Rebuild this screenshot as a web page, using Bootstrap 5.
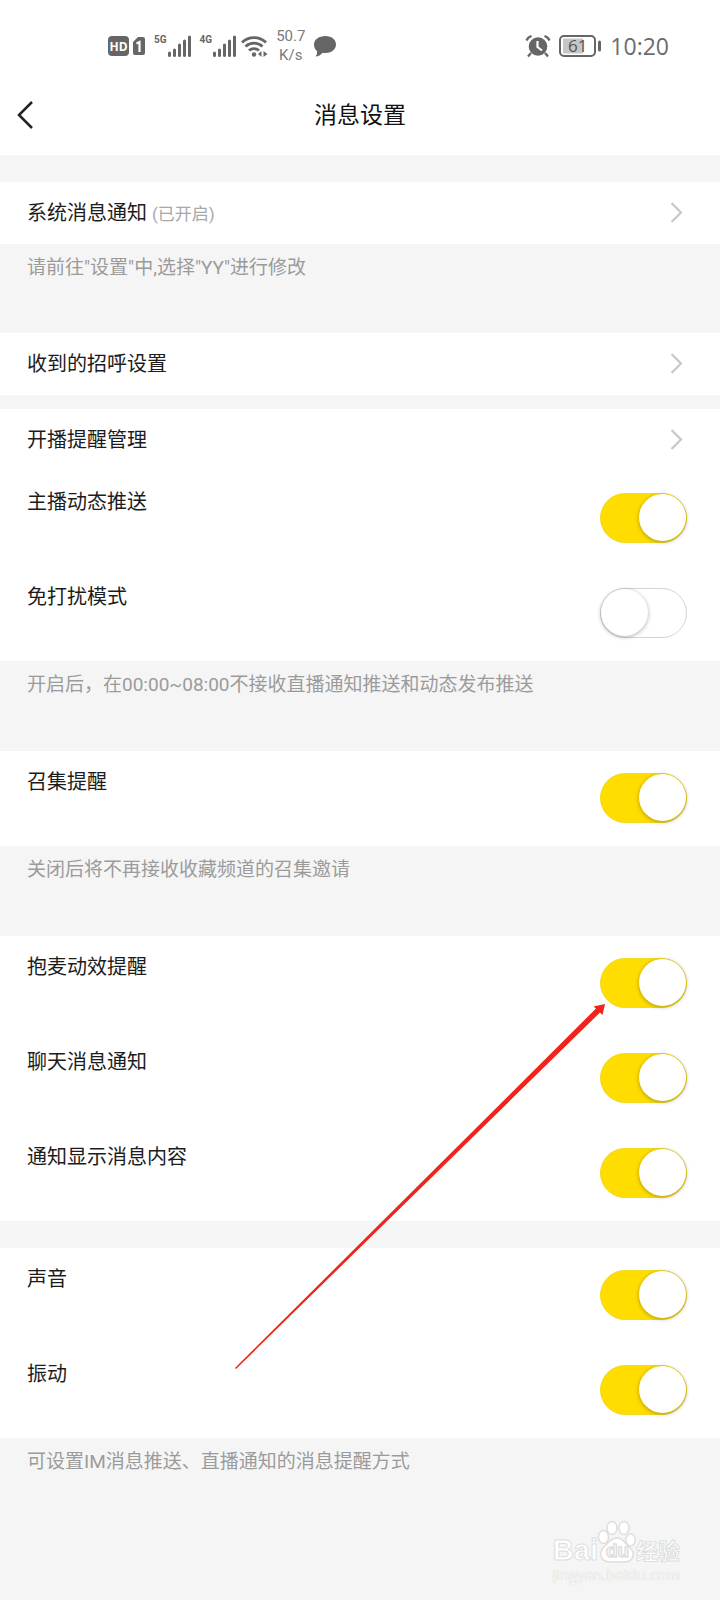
<!DOCTYPE html>
<html lang="zh-CN">
<head>
<meta charset="utf-8">
<meta name="viewport" content="width=device-width, initial-scale=1">
<title>消息设置</title>
<link href="https://cdn.jsdelivr.net/npm/bootstrap@5.3.0/dist/css/bootstrap.min.css" rel="stylesheet">
<style>
  body { font-family: Roboto, "Noto Sans CJK SC", sans-serif; background: #f5f5f5; color: #1c1c1c; }
  /* status bar */
  .status-bar { height: 77px; padding: 14px 51px 0 108px; color: #666; }
  .net-label { font: 700 10px/11px Roboto, sans-serif; }
  .net-speed { font-size: 15px; line-height: 19px; color: #7a7a7a; }
  .clock { font: 400 23px/28px "Open Sans", sans-serif; color: #6c6c6c; }
  .battery-text { font: 400 17px "Open Sans", sans-serif; }
  .hd-text { font: 700 12px "Open Sans", sans-serif; }
  /* title bar */
  .title-bar { height: 78px; padding: 0 16px; }
  .title-bar h1 { font-size: 23px; line-height: 32px; color: #111; }
  /* rows */
  .setting-row { padding: 0 33px 0 27px; font-size: 20px; line-height: 62px; color: inherit; }
  .link-row { height: 62px; padding-right: 37px; }
  .switch-row { min-height: 95px; }
  .state-text { font-size: 17px; line-height: 20px; color: #a8a8a8; }
  .hint { padding: 10px 27px 0; font-size: 19px; line-height: 28px; color: #9b9b9b; }
  .hint-tall { min-height: 90px; }
  .hint-tall.first-hint { min-height: 89px; }
  .gap-wide { margin-top: 27px; }
  .gap-thin { margin-top: 14px; }
  .form-check-input.toggle {
    width: 87px; height: 50px; margin: 22px 0 0; float: none; padding: 0; flex: none;
    border: 1px solid #d4d4d4; border-radius: 25px; background: #fff none; position: relative;
  }
  .toggle::before {
    content: ""; position: absolute; left: 0; top: 0; width: 47px; height: 47px;
    border-radius: 50%; background: #fff; box-shadow: 0 1px 4px rgba(0,0,0,.32);
  }
  .form-check-input.toggle:checked { background: #fd0 none; border-color: #f3d920; }
  .toggle:checked::before { left: 38px; }
  .pointer-arrow { position: absolute; top: 68px; right: 115px; pointer-events: none; }
  /* watermark */
  .watermark { padding: 0 40px 16px; color: #fff; }
  .wm-brand { font: 700 29px/28px "Liberation Sans", sans-serif; -webkit-text-stroke: 1px #dedede; }
  .wm-cn { font: 700 22px/30px "Noto Sans CJK SC", sans-serif; -webkit-text-stroke: 1px #dedede; }
  .wm-du { font: 700 19px "Liberation Sans", sans-serif; }
  .wm-url { font: 400 15px/20px "Open Sans", sans-serif; color: #fafafa; text-shadow: 0 0 1px #bbb; }
</style>
</head>
<body>
<div class="d-flex flex-column min-vh-100">
  <header class="bg-white">
    <div class="status-bar d-flex justify-content-between align-items-center">
      <div class="d-flex align-items-center">
        <svg width="38" height="22" viewBox="0 0 38 22" aria-label="HD 1">
          <rect x="0" y="1" width="21" height="20" rx="4" fill="#666"/>
          <text x="1.500" y="15.500" class="hd-text" fill="#fff">HD</text>
          <path d="M30 2h5a2 2 0 0 1 2 2v14a2 2 0 0 1-2 2h-8a2 2 0 0 1-2-2V7z" fill="#666"/>
          <path d="M28.500 8.500l3-1.500v10" fill="none" stroke="#fff" stroke-width="2.200"/>
        </svg>
        <div class="d-flex align-items-start ms-2">
          <span class="net-label">5G</span>
          <svg width="25" height="24" viewBox="0 0 25 24" aria-hidden="true"><path d="M2.500 19v2.500M7.500 16v5.500M12.500 11v10.500M17.500 7v14.500M22.500 3v18.500" stroke="#666" stroke-width="3" stroke-linecap="round"/></svg>
        </div>
        <div class="d-flex align-items-start ms-2">
          <span class="net-label">4G</span>
          <svg width="25" height="24" viewBox="0 0 25 24" aria-hidden="true"><path d="M2.500 19v2.500M7.500 16v5.500M12.500 11v10.500M17.500 7v14.500M22.500 3v18.500" stroke="#666" stroke-width="3" stroke-linecap="round"/></svg>
        </div>
        <svg class="ms-1" width="27" height="24" viewBox="0 0 27 24" aria-label="Wi-Fi">
          <g fill="none" stroke="#666" stroke-width="2.800"><path d="M1 8.500a17 17 0 0 1 24 0"/><path d="M4.500 12.500a12.500 12.500 0 0 1 17 0"/><path d="M8 16.500a7.500 7.500 0 0 1 10 0"/></g>
          <circle cx="13" cy="20.500" r="2.200" fill="#666"/>
          <path d="M20.500 17v6l-3.500-3zM22.500 17v6l4-3z" fill="#666"/>
        </svg>
        <div class="net-speed text-center ms-2">50.7<br>K/s</div>
        <svg class="ms-2" width="24" height="24" viewBox="0 0 24 24" aria-label="消息"><path d="M12.500 2C18.500 2 23 5.500 23 10.500S18 19 12.500 19c-1 0-2 0-3-.3C8 21 5 22.500 2.500 22.500 4 21 4.300 19 4 17 2 15.500 1 13.500 1 10.500 1 5.500 6 2 12.500 2z" fill="#666"/></svg>
      </div>
      <div class="d-flex align-items-center">
        <svg width="26" height="24" viewBox="0 0 26 24" aria-label="闹钟">
          <circle cx="13" cy="12.500" r="9.300" fill="#666"/>
          <path d="M1.500 6.500Q3 3 6.500 2M24.500 6.500Q23 3 19.500 2M6 19l-3 3.500M20 19l3 3.500" fill="none" stroke="#666" stroke-width="2.300"/>
          <path d="M12.500 7v6l4.500 3.500" fill="none" stroke="#fff" stroke-width="2.200"/>
        </svg>
        <svg class="ms-2" width="43" height="24" viewBox="0 0 43 24" aria-label="电量 61%">
          <rect x="1" y="2" width="35" height="20" rx="4" fill="#fff" stroke="#666" stroke-width="2"/>
          <path d="M4 4.500h20v15H4z" fill="#c6c6c6"/>
          <text x="9" y="18" class="battery-text" fill="#555">61</text>
          <path d="M40.500 8v8" stroke="#666" stroke-width="3" stroke-linecap="round"/>
        </svg>
        <span class="clock ms-2">10:20</span>
      </div>
    </div>
    <div class="title-bar d-flex align-items-center position-relative">
      <button type="button" class="btn p-0 border-0 d-flex position-absolute" aria-label="返回">
        <svg width="19" height="30" viewBox="0 0 19 30"><path d="M16 1L3 14l13 13" fill="none" stroke="#222" stroke-width="2.500"/></svg>
      </button>
      <h1 class="flex-fill text-center fw-normal m-0">消息设置</h1>
    </div>
  </header>

  <main>
    <section class="bg-white gap-wide">
      <a href="#" class="setting-row link-row d-flex align-items-center justify-content-between text-decoration-none">
        <span>系统消息通知 <span class="state-text">(已开启)</span></span>
        <svg width="13" height="22" viewBox="0 0 13 22" aria-hidden="true"><path d="M1.500 1L11 10.500 1.500 20" fill="none" stroke="#c8c8c8" stroke-width="2.200"/></svg>
      </a>
    </section>
    <p class="hint hint-tall first-hint m-0">请前往"设置"中,选择"YY"进行修改</p>

    <section class="bg-white">
      <a href="#" class="setting-row link-row d-flex align-items-center justify-content-between text-decoration-none">
        <span>收到的招呼设置</span>
        <svg width="13" height="22" viewBox="0 0 13 22" aria-hidden="true"><path d="M1.500 1L11 10.500 1.500 20" fill="none" stroke="#c8c8c8" stroke-width="2.200"/></svg>
      </a>
    </section>

    <section class="bg-white gap-thin">
      <a href="#" class="setting-row link-row d-flex align-items-center justify-content-between text-decoration-none">
        <span>开播提醒管理</span>
        <svg width="13" height="22" viewBox="0 0 13 22" aria-hidden="true"><path d="M1.500 1L11 10.500 1.500 20" fill="none" stroke="#c8c8c8" stroke-width="2.200"/></svg>
      </a>
      <div class="setting-row switch-row d-flex align-items-start justify-content-between">
        <label for="sw-push">主播动态推送</label>
        <input class="form-check-input toggle" type="checkbox" role="switch" id="sw-push" checked>
      </div>
      <div class="setting-row switch-row d-flex align-items-start justify-content-between">
        <label for="sw-dnd">免打扰模式</label>
        <input class="form-check-input toggle" type="checkbox" role="switch" id="sw-dnd">
      </div>
    </section>
    <p class="hint hint-tall m-0">开启后，在00:00~08:00不接收直播通知推送和动态发布推送</p>

    <section class="bg-white">
      <div class="setting-row switch-row d-flex align-items-start justify-content-between">
        <label for="sw-call">召集提醒</label>
        <input class="form-check-input toggle" type="checkbox" role="switch" id="sw-call" checked>
      </div>
    </section>
    <p class="hint hint-tall m-0">关闭后将不再接收收藏频道的召集邀请</p>

    <div class="position-relative">
      <section class="bg-white">
        <div class="setting-row switch-row d-flex align-items-start justify-content-between">
          <label for="sw-mic">抱麦动效提醒</label>
          <input class="form-check-input toggle" type="checkbox" role="switch" id="sw-mic" checked>
        </div>
        <div class="setting-row switch-row d-flex align-items-start justify-content-between">
          <label for="sw-chat">聊天消息通知</label>
          <input class="form-check-input toggle" type="checkbox" role="switch" id="sw-chat" checked>
        </div>
        <div class="setting-row switch-row d-flex align-items-start justify-content-between">
          <label for="sw-content">通知显示消息内容</label>
          <input class="form-check-input toggle" type="checkbox" role="switch" id="sw-content" checked>
        </div>
      </section>
      <section class="bg-white gap-wide">
        <div class="setting-row switch-row d-flex align-items-start justify-content-between">
          <label for="sw-sound">声音</label>
          <input class="form-check-input toggle" type="checkbox" role="switch" id="sw-sound" checked>
        </div>
        <div class="setting-row switch-row d-flex align-items-start justify-content-between">
          <label for="sw-vibrate">振动</label>
          <input class="form-check-input toggle" type="checkbox" role="switch" id="sw-vibrate" checked>
        </div>
      </section>
      <svg class="pointer-arrow" width="370" height="365" viewBox="0 0 370 365" aria-hidden="true"><path d="M0 364L361 4.500 358.500 2.500 370 0l-2.500 11-2.500-2.500L1 365z" fill="#f0241a"/></svg>
    </div>
    <p class="hint m-0">可设置IM消息推送、直播通知的消息提醒方式</p>
  </main>

  <footer class="watermark mt-auto d-flex flex-column align-items-end">
    <div class="d-flex align-items-end">
      <span class="wm-brand">Bai</span>
      <svg width="38" height="44" viewBox="1 0 38 44" aria-hidden="true">
        <g fill="#fff" stroke="#dedede" stroke-width="1.500">
          <ellipse cx="6.500" cy="17" rx="5" ry="6.500"/><ellipse cx="15" cy="8" rx="5" ry="6.500"/>
          <ellipse cx="27" cy="8" rx="5" ry="6.500"/><ellipse cx="33.500" cy="20" rx="4.700" ry="6"/>
          <path d="M20 18c6 0 8 5 11 8 4 3 6 6 5 10-1 5-5 6-9 6H13c-5 0-8-2-9-6-1-5 1-8 5-11 3-3 5-7 11-7z"/>
          <text x="9" y="37" class="wm-du">du</text>
        </g>
      </svg>
      <span class="wm-cn">经验</span>
    </div>
    <span class="wm-url">jingyan.baidu.com</span>
  </footer>
</div>
<script src="https://cdn.jsdelivr.net/npm/bootstrap@5.3.0/dist/js/bootstrap.bundle.min.js"></script>
</body>
</html>
